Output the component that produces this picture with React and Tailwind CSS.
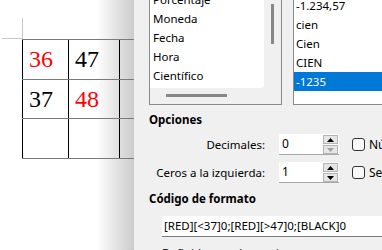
import React from "react";

function Spin({ value, downDisabled }) {
  return (
    <div className="w-[60px] h-[21px] bg-white border-b border-[#a8a8a8] flex items-start shrink-0">
      <div className="flex-1 pl-[3px] text-[12px] leading-[20px]">{value}</div>
      <div className="w-[15px] mr-[1px] flex flex-col gap-[1px] pt-[1px]">
        <div className="h-[9px] bg-[#e6e6e6] border border-[#b4b4b4] flex items-center justify-center">
          <svg width="7" height="4" viewBox="0 0 7 4"><path d="M0 4 L3.5 0 L7 4 Z" fill="#000" /></svg>
        </div>
        <div className="h-[9px] bg-[#e6e6e6] border border-[#b4b4b4] flex items-center justify-center">
          <svg width="7" height="4" viewBox="0 0 7 4"><path d="M0 0 L3.5 4 L7 0 Z" fill={downDisabled ? "#a0a0a0" : "#000"} /></svg>
        </div>
      </div>
    </div>
  );
}

function Check({ label }) {
  return (
    <div className="flex items-center ml-[13px] shrink-0">
      <div className="w-[13px] h-[13px] border border-[#333] rounded-[3px] bg-[#f9f9f9]" />
      <span className="ml-[4px] text-[12px] leading-[16px] whitespace-nowrap">{label}</span>
    </div>
  );
}

export default function App() {
  const rows = [
    [["36", "text-[#ff0000]"], ["47", "text-black"]],
    [["37", "text-black"], ["48", "text-[#ff0000]"]],
    [["", ""], ["", ""]],
  ];
  const rowH = ["h-[40px]", "h-[39px]", "h-[40px]"];
  return (
    <div className="w-[382px] h-[250px] overflow-hidden flex font-['Noto_Sans',sans-serif] text-black">
      <div className="w-[134px] h-full shrink-0 overflow-hidden bg-[linear-gradient(to_right,#ffffff_72%,#cbcbcb)]">
        <div className="ml-[2px] mt-[18px] w-[21px] h-[21px] border-r border-b border-[#c8c8c8]" />
        <div className="ml-[22px] w-[170px] border-b border-[#7a7a7a] font-['Liberation_Serif',serif]">
          {rows.map((r, i) => (
            <div key={i} className={`flex border-t border-[#7a7a7a] ${rowH[i]}`}>
              <div className={`w-[46px] border-l border-black pl-[6px] pt-[7px] text-[24px] leading-[24px] ${r[0][1]}`}>{r[0][0]}</div>
              <div className={`w-[51px] border-l border-black pl-[6px] pt-[7px] text-[24px] leading-[24px] ${r[1][1]}`}>{r[1][0]}</div>
              <div className="flex-1 border-l border-black" />
            </div>
          ))}
        </div>
      </div>

      <div className="flex-1 h-full bg-[#f0f0f0] pl-[15px] overflow-hidden text-[11.5px]">
        <div className="flex -mt-[11px] h-[116px]">
          <div className="w-[133px] shrink-0 border border-[#868a92] bg-[#f0f0f0] flex flex-col">
            <div className="flex h-[98px]">
              <div className="w-[114px] bg-white pl-[3px] leading-[19px] rounded-br-[3px]">
                <div>Porcentaje</div>
                <div>Moneda</div>
                <div>Fecha</div>
                <div>Hora</div>
                <div>Científico</div>
              </div>
              <div className="w-[17px] pt-[14px] pl-[7px]">
                <div className="w-[3px] h-[40px] bg-[#878787]" />
              </div>
            </div>
            <div className="h-[15px] pl-[16px] pt-[6px]">
              <div className="w-[61px] h-[3px] bg-[#878787]" />
            </div>
          </div>
          <div className="flex-1 ml-[11px] border-l border-t border-b border-[#868a92] bg-white pt-[6px] leading-[19px]">
            <div className="pl-[2px]">-1.234,57</div>
            <div className="pl-[2px]">cien</div>
            <div className="pl-[2px]">Cien</div>
            <div className="pl-[2px]">CIEN</div>
            <div className="pl-[2px] bg-[#0078d7] text-white">-1235</div>
          </div>
        </div>

        <div className="mt-[7px] leading-[16px] font-bold">Opciones</div>

        <div className="mt-[6px] flex items-center h-[21px]">
          <div className="w-[116px] text-right leading-[16px] shrink-0">Decimales:</div>
          <div className="ml-[14px]"><Spin value="0" downDisabled /></div>
          <Check label="Números negativos en rojo" />
        </div>
        <div className="mt-[7px] flex items-center h-[21px]">
          <div className="w-[116px] text-right leading-[16px] shrink-0 whitespace-nowrap">Ceros a la izquierda:</div>
          <div className="ml-[14px]"><Spin value="1" /></div>
          <Check label="Separador de miles" />
        </div>

        <div className="mt-[8px] leading-[16px] font-bold">Código de formato</div>

        <div className="mt-[9px] ml-[13px] h-[21px] bg-white border-b border-[#7a7a7a] pl-[2px] leading-[20px] whitespace-nowrap">
          [RED][&lt;37]0;[RED][&gt;47]0;[BLACK]0
        </div>

        <div className="mt-[8px] ml-[13px] leading-[16px] whitespace-nowrap">Definido por el usuario</div>
      </div>
    </div>
  );
}
